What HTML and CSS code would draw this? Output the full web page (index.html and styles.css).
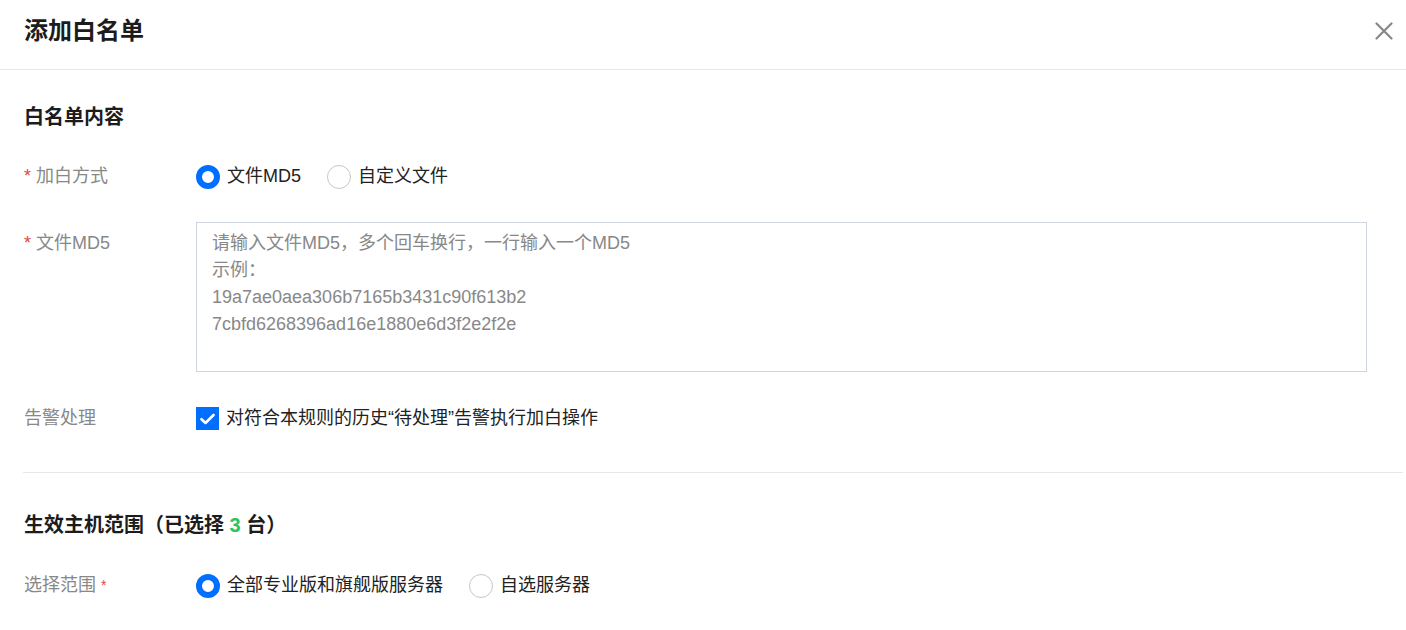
FILE: index.html
```html
<!DOCTYPE html>
<html lang="zh-CN">
<head>
<meta charset="utf-8">
<title>添加白名单</title>
<link rel="stylesheet" href="styles.css">
</head>
<body>
<div class="dialog">
  <div class="header">
    <h1 class="title">添加白名单</h1>
    <button class="close" aria-label="关闭">
      <svg width="18" height="18" viewBox="0 0 18 18"><path d="M1.5 1.5 L16.5 16.5 M16.5 1.5 L1.5 16.5" stroke="#888" stroke-width="2.2" stroke-linecap="round" fill="none"/></svg>
    </button>
  </div>
  <div class="content">
    <section class="section">
      <h2 class="section-title">白名单内容</h2>
      <div class="row">
        <div class="label"><span class="req">*</span>加白方式</div>
        <div class="control radios">
          <label class="radio"><span class="dot checked"></span><span>文件MD5</span></label>
          <label class="radio"><span class="dot"></span><span>自定义文件</span></label>
        </div>
      </div>
      <div class="row">
        <div class="label label-top"><span class="req">*</span>文件MD5</div>
        <div class="control">
          <textarea class="textarea" placeholder="请输入文件MD5，多个回车换行，一行输入一个MD5&#10;示例：&#10;19a7ae0aea306b7165b3431c90f613b2&#10;7cbfd6268396ad16e1880e6d3f2e2f2e"></textarea>
        </div>
      </div>
      <div class="row row-check">
        <div class="label">告警处理</div>
        <div class="control">
          <label class="check">
            <span class="box"><svg width="15" height="12" viewBox="0 0 15 12"><path d="M1.5 6.2 L5.5 10 L13.5 2" stroke="#fff" stroke-width="2.6" fill="none" stroke-linecap="round" stroke-linejoin="round"/></svg></span>
            <span>对符合本规则的历史“待处理”告警执行加白操作</span>
          </label>
        </div>
      </div>
    </section>
    <div class="divider"></div>
    <section class="section second">
      <h2 class="section-title">生效主机范围（已选择 <span class="num">3</span> 台）</h2>
      <div class="row">
        <div class="label">选择范围 <span class="req-after">*</span></div>
        <div class="control radios">
          <label class="radio"><span class="dot checked"></span><span>全部专业版和旗舰版服务器</span></label>
          <label class="radio"><span class="dot"></span><span>自选服务器</span></label>
        </div>
      </div>
    </section>
  </div>
</div>
</body>
</html>
```

FILE: styles.css
```css
* { box-sizing: border-box; }
html, body { margin: 0; padding: 0; background: #fff; }
body {
  font-family: "Liberation Sans", "Noto Sans CJK SC", sans-serif;
  font-size: 18px;
  color: #222;
  width: 1406px;
  height: 630px;
  overflow: hidden;
}
.header {
  display: flex;
  align-items: flex-start;
  padding: 18px 13px 0 24px;
  height: 70px;
  border-bottom: 1px solid #e6e6e6;
}
.title {
  margin: 0;
  font-size: 24px;
  line-height: 26px;
  font-weight: bold;
  color: #1c1c1c;
}
.close {
  margin-left: auto;
  margin-top: 4px;
  padding: 0;
  border: 0;
  background: none;
  width: 18px;
  height: 18px;
  display: flex;
}
.content { padding: 0 3px 0 24px; }
.section { padding-top: 33px; }
.section.second { padding-top: 38px; }
.section-title {
  margin: 0 0 32px;
  font-size: 20px;
  line-height: 28px;
  font-weight: bold;
  color: #1c1c1c;
}
.second .section-title { margin-bottom: 33px; }
.num { color: #29c45f; }
.row {
  display: flex;
  align-items: flex-start;
  margin-bottom: 32px;
}
.row:last-child { margin-bottom: 0; }
.row-check { margin-top: 33px; }
.label {
  width: 172px;
  flex: none;
  color: #888;
  line-height: 27px;
}
.label-top { margin-top: 8px; }
.req { color: #e54545; margin-right: 5px; }
.req-after { color: #e54545; font-size: 14px; vertical-align: 1px; }
.control { flex: 1; display: flex; align-items: center; min-height: 27px; padding-right: 36px; }
.radios { gap: 26px; }
.radio, .check {
  display: flex;
  align-items: center;
  gap: 7px;
  line-height: 27px;
  color: #222;
}
.dot {
  width: 24px;
  height: 24px;
  border-radius: 50%;
  border: 1px solid #c6c6c6;
  flex: none;
}
.dot.checked { border: 6px solid #006eff; }
.box {
  width: 23px;
  height: 23px;
  background: #006eff;
  display: flex;
  align-items: center;
  justify-content: center;
  flex: none;
}
.textarea {
  width: 100%;
  height: 150px;
  border: 1px solid #cfd5de;
  border-radius: 0;
  padding: 7px 15px;
  font-family: "Liberation Sans", "Noto Sans CJK SC", sans-serif;
  font-size: 18px;
  line-height: 27px;
  resize: none;
  outline: none;
  color: #222;
}
.textarea::placeholder { color: #888; opacity: 1; }
.divider {
  height: 1px;
  background: #e8e8e8;
  margin-top: 40px;
  margin-left: -1px;
}
```
